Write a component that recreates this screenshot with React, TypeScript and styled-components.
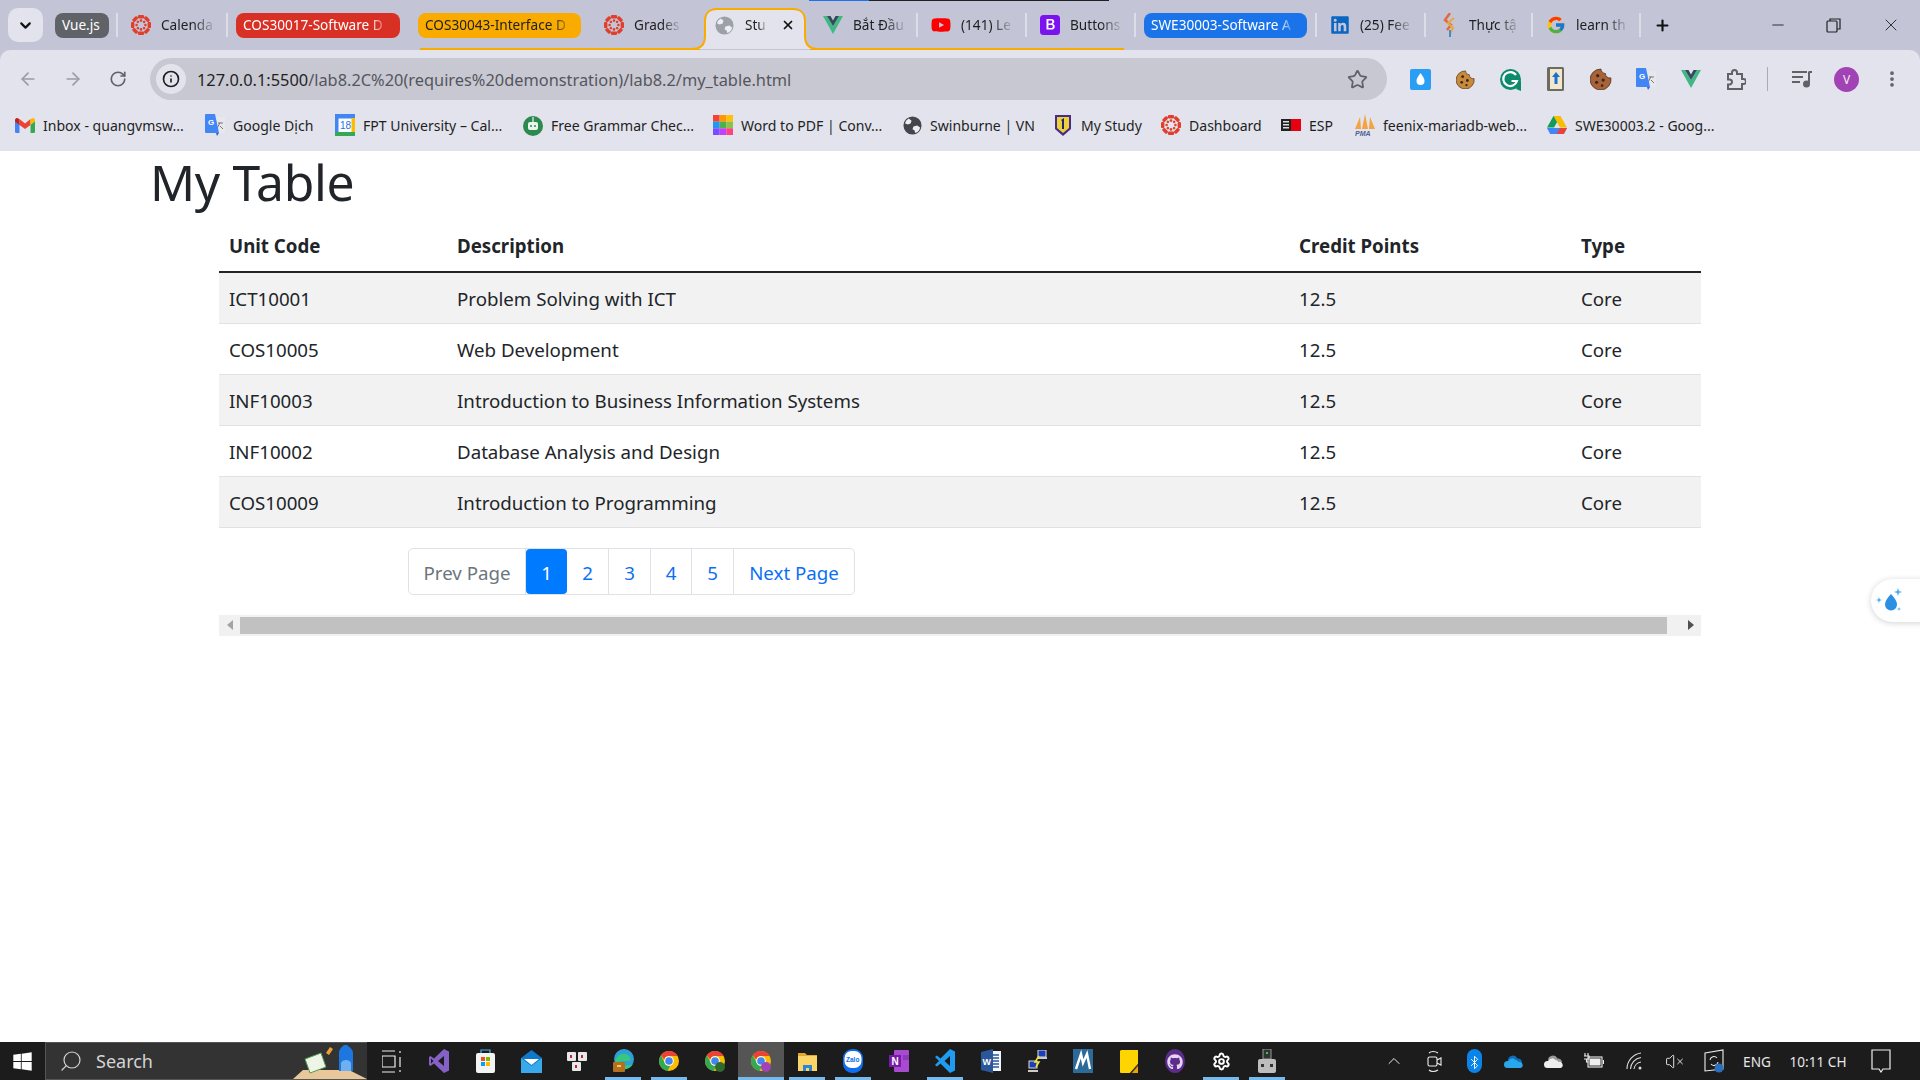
import { ReactNode } from 'react';
import styled, { createGlobalStyle } from 'styled-components';
import {
	ArrowLeft,
	ArrowRight,
	RotateCw,
	Star,
	ChevronDown,
	X,
	Plus,
	Minus,
	Info,
	Search,
	EllipsisVertical,
	Settings,
	ChevronUp,
	Bluetooth,
	VolumeX,
} from 'lucide-react';
import { FaYoutube, FaLinkedin, FaGithub, FaWindows } from 'react-icons/fa';
import { FcGoogle } from 'react-icons/fc';

const UI_FONT = `"Noto Sans", "Open Sans", sans-serif`;

const GlobalStyle = createGlobalStyle`
	html, body {
		margin: 0;
		padding: 0;
		background: #fff;
		overflow: hidden;
	}
	body {
		font-family: ${UI_FONT};
	}
`;

const Screen = styled.div`
	position: relative;
	width: 1920px;
	height: 1080px;
	display: flex;
	flex-direction: column;
	overflow: hidden;
	background: #fff;
`;

const Chrome = styled.header`
	background: #c3c4d6;
	flex: none;
`;

const TabStrip = styled.div`
	position: relative;
	height: 50px;
	display: flex;
	align-items: center;
	padding-left: 8px;
	box-sizing: border-box;
`;

const LoadBar = styled.div`
	position: absolute;
	top: 0;
	left: 809px;
	width: 300px;
	height: 1px;
	background: linear-gradient(to right, #1a73e8 0 60px, #202124 60px);
`;

const OrangeLine = styled.div<{ $left: number; $width: number }>`
	position: absolute;
	top: 48px;
	left: ${(p) => p.$left}px;
	width: ${(p) => p.$width}px;
	height: 2px;
	background: #f9ab00;
`;

const DropButton = styled.div`
	width: 35px;
	height: 34px;
	margin-right: 12px;
	border-radius: 10px;
	background: #e2e3ec;
	color: #111;
	display: flex;
	align-items: center;
	justify-content: center;
`;

const TabSep = styled.div<{ $ml?: number; $mr?: number }>`
	width: 2px;
	height: 24px;
	background: #dcdde6;
	flex: none;
	margin-left: ${(p) => p.$ml ?? 0}px;
	margin-right: ${(p) => p.$mr ?? 0}px;
`;

const GroupChip = styled.div<{ $bg: string; $fg: string; $w: number; $ml?: number; $mr?: number }>`
	width: ${(p) => p.$w}px;
	height: 25px;
	flex: none;
	box-sizing: border-box;
	padding: 0 7px;
	margin-left: ${(p) => p.$ml ?? 0}px;
	margin-right: ${(p) => p.$mr ?? 0}px;
	border-radius: 8px;
	background: ${(p) => p.$bg};
	color: ${(p) => p.$fg};
	font-size: 13.6px;
	line-height: 24px;
	white-space: nowrap;
`;

const ChipLabel = styled.span`
	display: inline-block;
	mask-image: linear-gradient(to right, #000 91%, rgba(0, 0, 0, 0.3) 100%);
`;

const Tab = styled.div<{ $w: number; $pad: number }>`
	width: ${(p) => p.$w}px;
	flex: none;
	height: 40px;
	box-sizing: border-box;
	padding-left: ${(p) => p.$pad}px;
	display: flex;
	align-items: center;
	gap: 10px;
	font-size: 13.6px;
	color: #1f1f1f;
`;

const TabIcon = styled.span`
	width: 20px;
	height: 20px;
	flex: none;
	display: flex;
	align-items: center;
	justify-content: center;
`;

const TabTitle = styled.span`
	white-space: nowrap;
	line-height: 18px;
	margin-top: -1px;
	mask-image: linear-gradient(to right, #000 62%, rgba(0, 0, 0, 0.15) 100%);
`;

const ActiveTab = styled.div`
	position: relative;
	width: 100px;
	height: 42px;
	margin-top: 8px;
	flex: none;
	box-sizing: border-box;
	padding: 0 0 8px 10px;
	display: flex;
	align-items: center;
	font-size: 13.6px;
	color: #1f1f1f;
`;

const ActiveShape = styled.svg`
	position: absolute;
	left: -14px;
	top: 0;
	width: 128px;
	height: 42px;
`;

const ActiveInner = styled.span`
	position: relative;
	display: flex;
	align-items: center;
	gap: 11px;
`;

const CloseX = styled.span`
	position: relative;
	margin-left: 15px;
	display: flex;
	color: #111;
`;

const NewTab = styled.div`
	margin-left: 13px;
	display: flex;
	color: #111;
`;

const WindowControls = styled.div`
	margin-left: auto;
	display: flex;
	align-items: center;
	height: 40px;
`;

const WindowBtn = styled.div<{ $w: number }>`
	width: ${(p) => p.$w}px;
	display: flex;
	justify-content: center;
	color: #222;
`;

const MaxIcon = styled.svg`
	width: 15px;
	height: 15px;
`;

const Toolbar = styled.div`
	height: 50px;
	box-sizing: border-box;
	padding: 8px 0 0 5px;
	background: #e2e3ec;
	border-radius: 10px 10px 0 0;
	display: flex;
	align-items: center;
`;

const NavBtn = styled.div<{ $muted?: boolean }>`
	width: 45px;
	height: 42px;
	flex: none;
	display: flex;
	align-items: center;
	justify-content: center;
	color: ${(p) => (p.$muted ? '#9b9ca4' : '#5f6368')};
`;

const Omnibox = styled.div`
	width: 1237px;
	height: 42px;
	margin: 0 11px 0 10px;
	flex: none;
	box-sizing: border-box;
	padding: 0 8px 0 6px;
	border-radius: 21px;
	background: #c8c8d2;
	display: flex;
	align-items: center;
`;

const InfoBadge = styled.div`
	width: 30px;
	height: 30px;
	border-radius: 50%;
	background: #e2e3ec;
	display: flex;
	align-items: center;
	justify-content: center;
	color: #1f1f1f;
	margin-right: 11px;
`;

const UrlText = styled.div`
	flex: 1;
	padding-top: 1px;
	font-size: 16.36px;
	color: #55565d;
	white-space: nowrap;
`;

const UrlHost = styled.span`
	color: #1f1f1f;
`;

const StarBtn = styled.div`
	display: flex;
	color: #5f6368;
	margin-right: 11px;
`;

const ToolbarSep = styled.div`
	width: 1px;
	height: 24px;
	background: #a9aab6;
	margin: 0 11px 0 9px;
	flex: none;
`;

const Avatar = styled.div`
	width: 25px;
	height: 25px;
	border-radius: 50%;
	background: #a142b5;
	color: #eee;
	font-size: 12px;
	display: flex;
	align-items: center;
	justify-content: center;
`;

const Bookmarks = styled.div`
	height: 51px;
	box-sizing: border-box;
	padding: 0 0 1px 15px;
	background: #e2e3ec;
	display: flex;
	align-items: center;
`;

const Bookmark = styled.div<{ $w: number }>`
	width: ${(p) => p.$w}px;
	flex: none;
	display: flex;
	align-items: center;
	gap: 8px;
	font-size: 14.05px;
	color: #1f1f1f;
	white-space: nowrap;
`;

const BookmarkIcon = styled.span`
	width: 20px;
	height: 20px;
	flex: none;
	display: flex;
	align-items: center;
	justify-content: center;
`;

const Page = styled.main`
	flex: 1;
	padding-left: 150px;
	color: #212529;
`;

const Title = styled.h1`
	margin: 0;
	height: 73px;
	font-size: 49.8px;
	font-weight: 400;
	line-height: 63px;
	letter-spacing: -0.3px;
`;

const TableWrap = styled.div`
	margin-left: 69px;
	width: 1482px;
`;

const UnitTable = styled.table`
	width: 1482px;
	table-layout: fixed;
	border-collapse: collapse;
	font-size: 18.7px;
`;

const HeadCell = styled.th<{ $w: number }>`
	width: ${(p) => p.$w}px;
	height: 48px;
	box-sizing: border-box;
	padding: 0 10px 4px;
	text-align: left;
	font-weight: 700;
	border-bottom: 2px solid #212529;
`;

const BodyRow = styled.tr`
	height: 51px;
	border-bottom: 1px solid #dee2e6;
	&:nth-child(odd) {
		background: #f2f2f2;
	}
`;

const BodyCell = styled.td`
	padding: 2px 10px 0;
`;

const Pagination = styled.nav`
	margin: 20px 0 0 189px;
	width: 447px;
	height: 47px;
	box-sizing: border-box;
	display: flex;
	border: 1px solid #dee2e6;
	border-radius: 5px;
	font-size: 18.7px;
`;

const PageLink = styled.div<{ $w: number; $active?: boolean; $muted?: boolean; $last?: boolean }>`
	width: ${(p) => p.$w}px;
	flex: none;
	box-sizing: border-box;
	padding-top: 2px;
	display: flex;
	align-items: center;
	justify-content: center;
	border-right: ${(p) => (p.$last || p.$active ? 'none' : '1px solid #dee2e6')};
	border-radius: ${(p) => (p.$active ? '4px' : '0')};
	background: ${(p) => (p.$active ? '#007bff' : 'transparent')};
	color: ${(p) => (p.$active ? '#fff' : p.$muted ? '#6c757d' : '#0b6ff5')};
`;

const Scrollbar = styled.div`
	margin-top: 20px;
	height: 21px;
	background: #f1f1f1;
	display: flex;
	align-items: center;
`;

const ScrollBtn = styled.div<{ $w: number; $pad?: number }>`
	width: ${(p) => p.$w}px;
	flex: none;
	box-sizing: border-box;
	padding-left: ${(p) => p.$pad ?? 0}px;
	display: flex;
	justify-content: center;
`;

const ScrollThumb = styled.div`
	width: 1427px;
	height: 17px;
	background: #c1c1c1;
	flex: none;
`;

const FloatButton = styled.div`
	position: absolute;
	left: 1871px;
	top: 579px;
	width: 60px;
	height: 43px;
	border-radius: 22px 0 0 22px;
	background: #fff;
	box-shadow: 0 1px 6px rgba(0, 0, 0, 0.18);
	padding-left: 5px;
	box-sizing: border-box;
	display: flex;
	align-items: center;
`;

const Taskbar = styled.footer`
	height: 38px;
	flex: none;
	background: #1c1c1c;
	display: flex;
	align-items: stretch;
	color: #fff;
`;

const StartBtn = styled.div`
	width: 45px;
	flex: none;
	display: flex;
	align-items: center;
	justify-content: center;
`;

const SearchBox = styled.div`
	position: relative;
	width: 322px;
	flex: none;
	box-sizing: border-box;
	background: #333;
	border: 1px solid #555;
	border-right: none;
	display: flex;
	align-items: center;
	gap: 13px;
	padding-left: 13px;
	color: #d4d4d4;
	font-size: 18px;
	overflow: hidden;
`;

const SearchGlyph = styled.span`
	display: flex;
	transform: scaleX(-1);
`;

const SearchArt = styled.svg`
	position: absolute;
	right: 0;
	bottom: 0;
	width: 74px;
	height: 34px;
`;

const TaskSlot = styled.div<{ $w?: number; $active?: boolean; $open?: boolean }>`
	position: relative;
	width: ${(p) => p.$w ?? 46}px;
	flex: none;
	display: flex;
	align-items: center;
	justify-content: center;
	background: ${(p) => (p.$active ? '#555' : 'transparent')};
	${(p) =>
		p.$open &&
		`
		&::after {
			content: '';
			position: absolute;
			left: 5px;
			right: 5px;
			bottom: 0;
			height: 3px;
			background: #76b9ed;
		}
	`}
	${(p) => p.$active && `&::after { left: 0; right: 0; }`}
`;

const Tray = styled.div`
	margin-left: auto;
	padding-right: 15px;
	display: flex;
	align-items: center;
	color: #eee;
`;

const TrayIcon = styled.span<{ $w?: number }>`
	width: ${(p) => p.$w ?? 40}px;
	flex: none;
	display: flex;
	justify-content: center;
`;

const TrayText = styled.span<{ $w: number }>`
	width: ${(p) => p.$w}px;
	flex: none;
	text-align: center;
	font-size: 13.6px;
	white-space: nowrap;
	color: #e8e8e8;
`;

function CanvasIcon({ size = 20 }: { size?: number }) {
	const dots = [0, 45, 90, 135, 180, 225, 270, 315];
	return (
		<svg width={size} height={size} viewBox="0 0 20 20">
			{dots.map((a) => (
				<g key={a} transform={`rotate(${a} 10 10)`}>
					<rect x="6.900" y="0" width="6.200" height="3.400" rx="1.200" fill="#e13f2b" />
					<circle cx="10" cy="5.600" r="1.300" fill="#e13f2b" />
				</g>
			))}
		</svg>
	);
}

function GlobeIcon({ color = '#9da0a8', size = 19 }: { color?: string; size?: number }) {
	return (
		<svg width={size} height={size} viewBox="0 0 20 20">
			<circle cx="10" cy="10" r="9.500" fill={color} />
			<path
				d="M6 2.500 9 5l-1 3-3 1-3-1.500A8 8 0 0 1 6 2.500ZM11 11l4-1 3 2a8 8 0 0 1-5 6l-1-3-2-1Z"
				fill="#eceef3"
			/>
		</svg>
	);
}

function VueIcon({ size = 20 }: { size?: number }) {
	return (
		<svg width={size} height={size} viewBox="0 0 20 18">
			<path d="M0 0h4l6 10 6-10h4L10 18Z" fill="#41b883" />
			<path d="M4 0h3.500L10 4.500 12.500 0H16l-6 10Z" fill="#34495e" />
		</svg>
	);
}

function BootstrapIcon() {
	return (
		<svg width="20" height="20" viewBox="0 0 20 20">
			<rect width="20" height="20" rx="3.500" fill="#7b13f0" />
			<path
				d="M6.500 4h4.700c2 0 3.100 1 3.100 2.600 0 1.200-.7 2-1.700 2.300 1.300.2 2.200 1.200 2.200 2.600 0 2-1.400 3.100-3.700 3.100H6.500ZM8.400 5.600v2.800h2.100c1.200 0 1.800-.5 1.800-1.400s-.6-1.400-1.700-1.400Zm0 4.300v3.100h2.400c1.300 0 2-.5 2-1.600s-.7-1.500-2.100-1.500Z"
				fill="#fff"
			/>
		</svg>
	);
}

function ThucTapIcon() {
	return (
		<svg width="13" height="24" viewBox="0 0 13 24">
			<path d="M7 0 2 7l6 5-4 5" fill="none" stroke="#e4683f" strokeWidth="2.500" />
			<path d="M11 5 5 10l5 5-3 6" fill="none" stroke="#e8a93c" strokeWidth="2" />
			<path d="M7 17v7" stroke="#3f8fd0" strokeWidth="2" />
		</svg>
	);
}

function GmailIcon() {
	return (
		<svg width="20" height="15" viewBox="0 0 20 15">
			<path d="M0 2v11.500A1.500 1.500 0 0 0 1.500 15H4.500V6Z" fill="#4285f4" />
			<path d="M20 2v11.500a1.500 1.500 0 0 1-1.500 1.500h-3V6Z" fill="#34a853" />
			<path d="M4.500 7V1L10 5.500 15.500 1v6L10 11Z" fill="#ea4335" />
			<path d="M0 2c0-1.700 2-2.600 3.300-1.600L4.500 1.300V7L0 3.500Z" fill="#c5221f" />
			<path d="M20 2c0-1.700-2-2.600-3.300-1.600l-1.200.9V7L20 3.500Z" fill="#fbbc04" />
		</svg>
	);
}

function TranslateIcon() {
	return (
		<svg width="20" height="22" viewBox="0 0 20 22">
			<path d="M8 3h11a1 1 0 0 1 1 1v14a1 1 0 0 1-1 1h-5l-3-16Z" fill="#e8e8ec" />
			<path d="M15 8.500l-3 6M13 9h5M15 12l3 3" stroke="#777" strokeWidth="1" fill="none" />
			<path d="M1 0h9l4 19H1a1 1 0 0 1-1-1V1a1 1 0 0 1 1-1Z" fill="#4285f4" />
			<path d="M14 19l-2 3-1-3Z" fill="#3367c7" />
			<text x="3" y="11" fontSize="8" fontWeight="700" fill="#fff" fontFamily="Liberation Sans">
				G
			</text>
		</svg>
	);
}

function CalendarIcon() {
	return (
		<svg width="20" height="22" viewBox="0 0 20 22">
			<rect width="20" height="22" rx="1" fill="#fff" />
			<rect width="20" height="4.500" fill="#4285f4" />
			<rect width="3.500" height="22" fill="#4285f4" />
			<rect y="18" width="20" height="4" fill="#34a853" />
			<rect x="16.500" y="4" width="3.500" height="14" fill="#fbbc04" />
			<text x="5" y="15" fontSize="10" fill="#1a73e8" fontFamily="Liberation Sans">
				18
			</text>
		</svg>
	);
}

function RobotIcon() {
	return (
		<svg width="20" height="22" viewBox="0 0 20 22">
			<circle cx="10" cy="12" r="10" fill="#2d8a4e" />
			<rect x="5" y="8" width="10" height="8" rx="2" fill="#eaf5ec" />
			<circle cx="8" cy="12" r="1" fill="#2d8a4e" />
			<circle cx="12" cy="12" r="1" fill="#2d8a4e" />
			<rect x="9.400" y="3" width="1.200" height="5" fill="#eaf5ec" />
		</svg>
	);
}

function WordPdfIcon() {
	const cells = ['#f44336', '#ff9800', '#ffc107', '#2196f3', '#4caf50', '#8bc34a', '#7c4dff', '#c040fb', '#ff4081'];
	return (
		<svg width="20" height="20" viewBox="0 0 21 21">
			{cells.map((c, i) => (
				<rect key={c} x={(i % 3) * 7} y={Math.floor(i / 3) * 7} width="7" height="7" fill={c} />
			))}
		</svg>
	);
}

function ShieldIcon() {
	return (
		<svg width="16" height="22" viewBox="0 0 16 22">
			<path d="M0 1h16v14l-8 7-8-7Z" fill="#4a2a8a" />
			<path d="M2 3h12v11l-6 5-6-5Z" fill="#e9d23a" />
			<path d="M6 6l3-2v11H7V7Z" fill="#28246a" />
		</svg>
	);
}

function EspIcon() {
	return (
		<svg width="20" height="12" viewBox="0 0 20 12">
			<rect width="20" height="12" fill="#e60012" />
			<rect width="10" height="12" fill="#222" />
			<rect x="2" y="2" width="6" height="1.500" fill="#ddd" />
			<rect x="2" y="5" width="6" height="1.500" fill="#ddd" />
			<rect x="2" y="8" width="6" height="1.500" fill="#ddd" />
		</svg>
	);
}

function PmaIcon() {
	return (
		<svg width="20" height="23" viewBox="0 0 20 23">
			<path d="M0 15 5 3l1 12ZM7 15l3-15 3 15ZM14 15l1-12 5 12Z" fill="#f4a340" />
			<text x="0" y="22" fontSize="7" fontWeight="700" fontStyle="italic" fill="#4a5f94" fontFamily="Liberation Sans">
				PMA
			</text>
		</svg>
	);
}

function DriveIcon() {
	return (
		<svg width="20" height="18" viewBox="0 0 20 18">
			<path d="M6.500 0h7L7 11.500H0Z" fill="#0f9d58" />
			<path d="M13.500 0 20 11.500h-7L6.500 0Z" fill="#fbbc04" />
			<path d="M0 12h20l-3.200 6H3.200Z" fill="#4285f4" />
			<path d="M13 12h7l-3.200 6h-7Z" fill="#ea4335" />
		</svg>
	);
}

function WaterIcon() {
	return (
		<svg width="21" height="21" viewBox="0 0 21 21">
			<rect width="21" height="21" rx="2" fill="#2a9df4" />
			<path d="M10.500 4c3 4 4 6 4 8a4 4 0 0 1-8 0c0-2 1-4 4-8Z" fill="#fff" />
		</svg>
	);
}

function CookieIcon({ size = 19, color = '#c98a3c' }: { size?: number; color?: string }) {
	return (
		<svg width={size} height={size} viewBox="0 0 20 20">
			<path d="M10 1a4 4 0 0 0 4 4 4 4 0 0 0 5 4 9.500 9.500 0 1 1-9-8Z" fill={color} stroke="#5a3a1a" strokeWidth="0.800" />
			<circle cx="7" cy="7" r="1.500" fill="#3a2a1a" />
			<circle cx="12" cy="11" r="1.500" fill="#3a2a1a" />
			<circle cx="6" cy="13" r="1.500" fill="#3a2a1a" />
			<circle cx="11" cy="16" r="1.200" fill="#3a2a1a" />
		</svg>
	);
}

function GrammarlyIcon() {
	return (
		<svg width="21" height="23" viewBox="0 0 21 23">
			<circle cx="10.500" cy="11.500" r="10.500" fill="#0b8a6c" />
			<path d="M16 7a7 7 0 1 0 1 6h-5.500" fill="none" stroke="#fff" strokeWidth="2.200" />
			<path d="M21 12v11l-5-2Z" fill="#0b8a6c" />
		</svg>
	);
}

function BookUpIcon() {
	return (
		<svg width="17" height="24" viewBox="0 0 17 24">
			<rect width="17" height="24" rx="1.500" fill="#6b6b60" />
			<rect x="3" y="2" width="12" height="20" fill="#f0e8cc" />
			<path d="M9 5l4 5h-2.500v7h-3v-7H5Z" fill="#1a6fd0" />
		</svg>
	);
}

function PuzzleIcon() {
	return (
		<svg width="20" height="21" viewBox="0 0 20 21" fill="none" stroke="#5f6368" strokeWidth="2">
			<path d="M2 5h4V3.500a2.500 2.500 0 0 1 5 0V5h5v5h1.500a2.500 2.500 0 0 1 0 5H16v5H2v-4.500h1.500a2.500 2.500 0 0 0 0-5H2Z" />
		</svg>
	);
}

function MediaIcon() {
	return (
		<svg width="20" height="18" viewBox="0 0 20 18" fill="none" stroke="#5f6368" strokeWidth="2">
			<path d="M0 2h15M0 7h11M0 12h8" />
			<path d="M17 1.500v12" />
			<circle cx="14.500" cy="14" r="2.500" fill="#5f6368" />
			<path d="M17 2h3" />
		</svg>
	);
}

function DropSparkle() {
	return (
		<svg width="30" height="28" viewBox="0 0 30 28">
			<path d="M15 7c4 4.500 6 7.500 6 10.500a6 6 0 0 1-12 0C9 14.500 11 11.500 15 7Z" fill="#2b8fe3" />
			<path d="M22 1l1 3 3 1-3 1-1 3-1-3-3-1 3-1ZM3 10l.8 2.200L6 13l-2.200.8L3 16l-.8-2.200L0 13l2.200-.8ZM23 20l.5 1.500L25 22l-1.500.5L23 24l-.5-1.500L21 22l1.500-.5Z" fill="#43aef5" />
		</svg>
	);
}

function TaskViewIcon() {
	return (
		<svg width="20" height="23" viewBox="0 0 20 23" fill="none" stroke="#eee" strokeWidth="1.200">
			<path d="M0 1h13M0 22h13M0 6h13v11H0ZM18 1v2M18 7v10M18 20v2" />
		</svg>
	);
}

function VsIcon() {
	return (
		<svg width="20" height="24" viewBox="0 0 20 24">
			<path d="M15 0l5 2.500v19L15 24 5 14.500 1.500 17 0 16V8l1.500-1L5 9.500ZM15 7l-6 5 6 5ZM2 9.500v5L4.500 12Z" fill="#8661c5" />
		</svg>
	);
}

function StoreIcon() {
	return (
		<svg width="19" height="24" viewBox="0 0 19 24">
			<path d="M5 4V1h9v3" fill="none" stroke="#4ab5e8" strokeWidth="1.200" />
			<rect y="4" width="19" height="20" rx="2" fill="#f3f3f3" />
			<rect x="5" y="8" width="4" height="4" fill="#f25022" />
			<rect x="10" y="8" width="4" height="4" fill="#7fba00" />
			<rect x="5" y="13" width="4" height="4" fill="#00a4ef" />
			<rect x="10" y="13" width="4" height="4" fill="#ffb900" />
		</svg>
	);
}

function MailIcon() {
	return (
		<svg width="21" height="23" viewBox="0 0 21 23">
			<path d="M0 8 10.500 0 21 8v15H0Z" fill="#0f78c8" />
			<path d="M0 8l10.500 8L21 8v15H0Z" fill="#38a9ea" />
			<path d="M3 9h15l-7.500 6Z" fill="#fff" />
		</svg>
	);
}

function KeysIcon() {
	return (
		<svg width="20" height="20" viewBox="0 0 20 20">
			<rect x="0" y="1" width="9" height="9" rx="1" fill="#e8e8e8" />
			<rect x="11" y="1" width="9" height="9" rx="1" fill="#e8e8e8" />
			<rect x="5" y="11" width="9" height="9" rx="1" fill="#e8e8e8" />
			<rect x="3" y="4" width="2" height="3" fill="#c4262e" />
			<rect x="14" y="4" width="2" height="3" fill="#c4262e" />
			<rect x="8" y="14" width="2" height="3" fill="#c4262e" />
		</svg>
	);
}

function EdgeIcon() {
	return (
		<svg width="21" height="24" viewBox="0 0 21 24">
			<circle cx="11" cy="10" r="10" fill="#2f9fd8" />
			<path d="M3 10c2-5 9-7 13-3 2 2 2 5-1 5H7c0 4 6 6 13 3-3 6-11 7-15 3-3-2-3-6-2-8Z" fill="#37c880" />
			<rect x="0" y="13" width="12" height="10" rx="1" fill="#b5701d" />
			<rect x="4" y="16" width="4" height="2" fill="#f2c66d" />
		</svg>
	);
}

function ChromeIcon({ badge }: { badge?: string }) {
	return (
		<svg width="20" height="24" viewBox="0 0 20 24">
			<circle cx="10" cy="12" r="10" fill="#fbbc04" />
			<path d="M10 2a10 10 0 0 1 8.700 5H10a5 5 0 0 0-4.700 3.400L1.900 6.200A10 10 0 0 1 10 2Z" fill="#ea4335" />
			<path d="M1.900 6.200 6 14.500a5 5 0 0 0 5 2.400L8.500 21.900A10 10 0 0 1 1.900 6.200Z" fill="#34a853" />
			<circle cx="10" cy="12" r="4.800" fill="#fff" />
			<circle cx="10" cy="12" r="3.800" fill="#4285f4" />
			{badge && <circle cx="15" cy="18" r="5" fill={badge} />}
		</svg>
	);
}

function FolderIcon() {
	return (
		<svg width="19" height="20" viewBox="0 0 19 20">
			<path d="M0 2h7l2 2h10v16H0Z" fill="#e0a82e" />
			<rect y="5" width="19" height="15" fill="#fbd568" />
			<path d="M5 20v-6h9v6h-3v-3H8v3Z" fill="#2c86d8" />
		</svg>
	);
}

function ZaloIcon() {
	return (
		<svg width="20" height="24" viewBox="0 0 20 24">
			<rect width="20" height="24" rx="9" fill="#0f6df0" />
			<rect x="1.500" y="2" width="17" height="17" rx="7" fill="#fff" />
			<text x="3" y="13" fontSize="6.500" fontWeight="700" fill="#0f6df0" fontFamily="Liberation Sans">
				Zalo
			</text>
		</svg>
	);
}

function OneNoteIcon() {
	return (
		<svg width="20" height="22" viewBox="0 0 20 22">
			<rect x="5" width="15" height="22" rx="1" fill="#a84bd0" />
			<rect x="14" y="5" width="6" height="5" fill="#8b3bb8" />
			<rect y="5" width="12" height="12" fill="#7719aa" />
			<text x="2.500" y="15" fontSize="10" fontWeight="700" fill="#fff" fontFamily="Liberation Sans">
				N
			</text>
		</svg>
	);
}

function VscodeIcon() {
	return (
		<svg width="20" height="24" viewBox="0 0 20 24">
			<path d="M15 0l5 2.500v19L15 24 5.500 14.500 2 17.500 0 16l4-4-4-4 2-1.500 3.500 3L15 0Zm0 7-5.500 5 5.500 5Z" fill="#1f9cf0" />
		</svg>
	);
}

function WordIcon() {
	return (
		<svg width="20" height="24" viewBox="0 0 20 24">
			<rect x="5" y="2" width="15" height="20" fill="#f4f6fa" />
			<path d="M11 6h7M11 9h7M11 12h7M11 15h7M11 18h7" stroke="#2b579a" strokeWidth="1.300" />
			<path d="M0 3 12 0v24L0 21Z" fill="#2b579a" />
			<text x="1.500" y="16" fontSize="9" fontWeight="700" fill="#fff" fontFamily="Liberation Sans">
				W
			</text>
		</svg>
	);
}

function PuttyIcon() {
	return (
		<svg width="19" height="23" viewBox="0 0 19 23">
			<rect x="10" y="0" width="8" height="7" fill="#1b3fb5" stroke="#ddd" />
			<rect x="1" y="11" width="8" height="7" fill="#1b3fb5" stroke="#ddd" />
			<path d="M0 21h10M9 8h10" stroke="#ccc" strokeWidth="2" />
			<path d="M11 6 7 12h4l-3 5" stroke="#f2e23a" strokeWidth="1.500" fill="none" />
		</svg>
	);
}

function MobaIcon() {
	return (
		<svg width="20" height="24" viewBox="0 0 20 24">
			<rect width="20" height="24" fill="#2c6a9a" />
			<path d="M3 20 8 5l2 9 4-9 3 15" stroke="#fff" strokeWidth="2.400" fill="none" />
		</svg>
	);
}

function StickyIcon() {
	return (
		<svg width="18" height="23" viewBox="0 0 18 23">
			<path d="M1 0h17v14l-8 9H1a1 1 0 0 1-1-1V1Z" fill="#ffd500" />
			<path d="M18 14v9h-8Z" fill="#3a3a3a" />
			<path d="M18 16v7h-6Z" fill="#f2a100" />
		</svg>
	);
}

function GithubBadge() {
	return (
		<svg width="20" height="24" viewBox="0 0 20 24">
			<ellipse cx="10" cy="12" rx="10" ry="12" fill="#5d2b8c" />
			<foreignObject x="2" y="4" width="16" height="16">
				<FaGithub size={16} color="#e4d4f0" />
			</foreignObject>
		</svg>
	);
}

function UsbIcon() {
	return (
		<svg width="20" height="24" viewBox="0 0 20 24">
			<rect x="6" y="0" width="8" height="10" fill="#333" stroke="#999" />
			<rect x="9" y="3" width="2" height="2" fill="#3c3" />
			<rect x="1" y="10" width="18" height="14" rx="2" fill="#bdbdbd" />
			<rect x="4" y="15" width="3" height="3" fill="#333" />
			<rect x="13" y="15" width="3" height="3" fill="#333" />
		</svg>
	);
}

function MeetIcon() {
	return (
		<svg width="15" height="23" viewBox="0 0 15 23" fill="none" stroke="#eee" strokeWidth="1.100">
			<path d="M2 3c2-2 6-2 9 0M2 20c2 2 6 2 9 0" />
			<rect x="1" y="7" width="9" height="9" rx="1.500" />
			<path d="M10 10l4-2v7l-4-2" />
		</svg>
	);
}

function BatteryIcon() {
	return (
		<svg width="20" height="16" viewBox="0 0 20 16" fill="none" stroke="#eee" strokeWidth="1.100">
			<path d="M1 0v3M4 0v3M0 3h5v3H0M2.500 6v3h2" />
			<rect x="4" y="4" width="14" height="10" />
			<rect x="6" y="6" width="10" height="6" fill="#eee" />
			<path d="M19.500 7v4" />
		</svg>
	);
}

function WifiArcs() {
	return (
		<svg width="16" height="18" viewBox="0 0 16 18" fill="none" stroke="#ddd" strokeWidth="1.100">
			<path d="M1 17A16 16 0 0 1 15 1M4.500 17A12 12 0 0 1 15 5.500M8 17A8 8 0 0 1 15 10" />
			<circle cx="14" cy="16" r="1.500" fill="#ddd" stroke="none" />
		</svg>
	);
}

function ImeIcon() {
	return (
		<svg width="20" height="24" viewBox="0 0 20 24">
			<path d="M1 4 19 1v19L1 22Z" fill="none" stroke="#eee" strokeWidth="1.100" />
			<path d="M6 11a4 4 0 0 1 7-2M14 13a4 4 0 0 1-7 2" fill="none" stroke="#eee" strokeWidth="1.100" />
			<circle cx="15" cy="19" r="4.500" fill="#2c6fbd" />
		</svg>
	);
}

function NotifyIcon() {
	return (
		<svg width="20" height="24" viewBox="0 0 20 24" fill="none" stroke="#eee" strokeWidth="1.200">
			<path d="M1 1h18v19h-7l-2 3-2-3H1Z" />
		</svg>
	);
}

function BluetoothBadge() {
	return (
		<svg width="15" height="24" viewBox="0 0 15 24">
			<rect width="15" height="24" rx="7.500" fill="#0a84e8" />
			<foreignObject x="0" y="4" width="15" height="16">
				<Bluetooth size={15} color="#fff" strokeWidth={1.500} />
			</foreignObject>
		</svg>
	);
}

function OneDriveIcon({ top, bottom }: { top: string; bottom: string }) {
	return (
		<svg width="20" height="14" viewBox="0 0 20 14">
			<path d="M4 7a5 5 0 0 1 9.500-2.500A4 4 0 0 1 18 8H4Z" fill={top} />
			<path d="M3.500 14a3.500 3.500 0 0 1 0-7h1a4 4 0 0 1 7-1 3.500 3.500 0 0 1 3 2 3 3 0 0 1 2 6Z" fill={bottom} />
		</svg>
	);
}

interface TabData {
	width: number;
	pad: number;
	icon: ReactNode;
	title: string;
}

function BrowserTab({ width, pad, icon, title }: TabData) {
	return (
		<Tab $w={width} $pad={pad}>
			<TabIcon>{icon}</TabIcon>
			<TabTitle>{title}</TabTitle>
		</Tab>
	);
}

const bookmarks: { w: number; icon: ReactNode; text: string }[] = [
	{ w: 190, icon: <GmailIcon />, text: 'Inbox - quangvmsw...' },
	{ w: 130, icon: <TranslateIcon />, text: 'Google Dịch' },
	{ w: 188, icon: <CalendarIcon />, text: 'FPT University – Cal...' },
	{ w: 190, icon: <RobotIcon />, text: 'Free Grammar Chec...' },
	{ w: 189, icon: <WordPdfIcon />, text: 'Word to PDF | Conv...' },
	{ w: 151, icon: <GlobeIcon color="#44464c" />, text: 'Swinburne | VN' },
	{ w: 108, icon: <ShieldIcon />, text: 'My Study' },
	{ w: 120, icon: <CanvasIcon />, text: 'Dashboard' },
	{ w: 74, icon: <EspIcon />, text: 'ESP' },
	{ w: 192, icon: <PmaIcon />, text: 'feenix-mariadb-web...' },
	{ w: 180, icon: <DriveIcon />, text: 'SWE30003.2 - Goog...' },
];

const units = [
	['ICT10001', 'Problem Solving with ICT', '12.5', 'Core'],
	['COS10005', 'Web Development', '12.5', 'Core'],
	['INF10003', 'Introduction to Business Information Systems', '12.5', 'Core'],
	['INF10002', 'Database Analysis and Design', '12.5', 'Core'],
	['COS10009', 'Introduction to Programming', '12.5', 'Core'],
];

const pages = [
	{ label: 'Prev Page', w: 117, muted: true },
	{ label: '1', w: 41, active: true },
	{ label: '2', w: 42 },
	{ label: '3', w: 42 },
	{ label: '4', w: 41 },
	{ label: '5', w: 42 },
	{ label: 'Next Page', w: 120, last: true },
];

const taskApps: { icon: ReactNode; open?: boolean; active?: boolean; w?: number }[] = [
	{ icon: <TaskViewIcon />, w: 49 },
	{ icon: <VsIcon /> },
	{ icon: <StoreIcon /> },
	{ icon: <MailIcon /> },
	{ icon: <KeysIcon /> },
	{ icon: <EdgeIcon />, open: true },
	{ icon: <ChromeIcon />, open: true },
	{ icon: <ChromeIcon badge="#2e6b2e" /> },
	{ icon: <ChromeIcon badge="#a142b5" />, active: true, open: true },
	{ icon: <FolderIcon />, open: true },
	{ icon: <ZaloIcon />, open: true },
	{ icon: <OneNoteIcon /> },
	{ icon: <VscodeIcon />, open: true },
	{ icon: <WordIcon /> },
	{ icon: <PuttyIcon /> },
	{ icon: <MobaIcon /> },
	{ icon: <StickyIcon /> },
	{ icon: <GithubBadge /> },
	{ icon: <Settings size={19} color="#fff" strokeWidth={2.500} />, open: true },
	{ icon: <UsbIcon />, open: true },
];

export default function App() {
	return (
		<Screen>
			<GlobalStyle />
			<Chrome>
				<TabStrip>
					<LoadBar />
					<OrangeLine $left={420} $width={280} />
					<OrangeLine $left={810} $width={314} />
					<DropButton>
						<ChevronDown size={17} strokeWidth={3} />
					</DropButton>
					<GroupChip $bg="#5f6368" $fg="#fff" $w={54} $mr={7}>
						Vue.js
					</GroupChip>
					<TabSep />
					<BrowserTab width={108} pad={13} icon={<CanvasIcon />} title="Calenda" />
					<TabSep $mr={8} />
					<GroupChip $bg="#d93025" $fg="#fff" $w={164} $mr={18}>
						<ChipLabel>COS30017-Software D</ChipLabel>
					</GroupChip>
					<GroupChip $bg="#f9ab00" $fg="#202124" $w={163}>
						<ChipLabel>COS30043-Interface D</ChipLabel>
					</GroupChip>
					<BrowserTab width={124} pad={23} icon={<CanvasIcon />} title="Grades" />
					<ActiveTab>
						<ActiveShape viewBox="0 0 128 42">
							<path
								d="M1 41c9 0 13-4 13-13V13C14 6 18 1 26 1h76c8 0 12 5 12 12v15c0 9 4 13 13 13"
								fill="#e2e3ec"
								stroke="#f9ab00"
								strokeWidth="2"
							/>
						</ActiveShape>
						<ActiveInner>
							<GlobeIcon />
							<TabTitle>Stu</TabTitle>
						</ActiveInner>
						<CloseX>
							<X size={14} strokeWidth={3} />
						</CloseX>
					</ActiveTab>
					<BrowserTab width={111} pad={18} icon={<VueIcon />} title="Bắt Đầu" />
					<TabSep />
					<BrowserTab width={107} pad={13} icon={<FaYoutube size={22} color="#f00" />} title="(141) Le" />
					<TabSep />
					<BrowserTab width={107} pad={13} icon={<BootstrapIcon />} title="Buttons" />
					<TabSep $mr={8} />
					<GroupChip $bg="#1a73e8" $fg="#fff" $w={163} $mr={8}>
						<ChipLabel>SWE30003-Software A</ChipLabel>
					</GroupChip>
					<TabSep />
					<BrowserTab width={107} pad={13} icon={<FaLinkedin size={20} color="#0a66c2" />} title="(25) Fee" />
					<TabSep />
					<BrowserTab width={105} pad={13} icon={<ThucTapIcon />} title="Thực tậ" />
					<TabSep />
					<BrowserTab width={106} pad={13} icon={<FcGoogle size={20} />} title="learn th" />
					<TabSep />
					<NewTab>
						<Plus size={17} strokeWidth={3} />
					</NewTab>
					<WindowControls>
						<WindowBtn $w={55}>
							<Minus size={18} strokeWidth={1.200} />
						</WindowBtn>
						<WindowBtn $w={57}>
							<MaxIcon viewBox="0 0 15 15" fill="none" stroke="#222" strokeWidth="1.200">
								<rect x="1" y="3" width="10" height="11" rx="1" />
								<path d="M4 3V1h10v10h-3" />
							</MaxIcon>
						</WindowBtn>
						<WindowBtn $w={58}>
							<X size={20} strokeWidth={1.100} />
						</WindowBtn>
					</WindowControls>
				</TabStrip>
				<Toolbar>
					<NavBtn $muted>
						<ArrowLeft size={20} />
					</NavBtn>
					<NavBtn $muted>
						<ArrowRight size={20} />
					</NavBtn>
					<NavBtn>
						<RotateCw size={18} strokeWidth={2.200} />
					</NavBtn>
					<Omnibox>
						<InfoBadge>
							<Info size={18} strokeWidth={2.200} />
						</InfoBadge>
						<UrlText>
							<UrlHost>127.0.0.1:5500</UrlHost>/lab8.2C%20(requires%20demonstration)/lab8.2/my_table.html
						</UrlText>
						<StarBtn>
							<Star size={21} strokeWidth={2} />
						</StarBtn>
					</Omnibox>
					<NavBtn><WaterIcon /></NavBtn>
					<NavBtn><CookieIcon /></NavBtn>
					<NavBtn><GrammarlyIcon /></NavBtn>
					<NavBtn><BookUpIcon /></NavBtn>
					<NavBtn><CookieIcon size={22} color="#a8633a" /></NavBtn>
					<NavBtn><TranslateIcon /></NavBtn>
					<NavBtn><VueIcon /></NavBtn>
					<NavBtn><PuzzleIcon /></NavBtn>
					<ToolbarSep />
					<NavBtn><MediaIcon /></NavBtn>
					<NavBtn><Avatar>V</Avatar></NavBtn>
					<NavBtn><EllipsisVertical size={20} strokeWidth={2.500} /></NavBtn>
				</Toolbar>
				<Bookmarks>
					{bookmarks.map((b) => (
						<Bookmark key={b.text} $w={b.w}>
							<BookmarkIcon>{b.icon}</BookmarkIcon>
							{b.text}
						</Bookmark>
					))}
				</Bookmarks>
			</Chrome>
			<Page>
				<Title>My Table</Title>
				<TableWrap>
					<UnitTable>
						<thead>
							<tr>
								<HeadCell $w={228}>Unit Code</HeadCell>
								<HeadCell $w={842}>Description</HeadCell>
								<HeadCell $w={282}>Credit Points</HeadCell>
								<HeadCell $w={130}>Type</HeadCell>
							</tr>
						</thead>
						<tbody>
							{units.map((u) => (
								<BodyRow key={u[0]}>
									{u.map((value, i) => (
										<BodyCell key={i}>{value}</BodyCell>
									))}
								</BodyRow>
							))}
						</tbody>
					</UnitTable>
					<Pagination>
						{pages.map((p) => (
							<PageLink key={p.label} $w={p.w} $active={p.active} $muted={p.muted} $last={p.last}>
								{p.label}
							</PageLink>
						))}
					</Pagination>
					<Scrollbar>
						<ScrollBtn $w={21}>
							<svg width="6" height="10" viewBox="0 0 6 10">
								<path d="M6 0v10L0 5Z" fill="#a3a3a3" />
							</svg>
						</ScrollBtn>
						<ScrollThumb />
						<ScrollBtn $w={34} $pad={13}>
							<svg width="6" height="10" viewBox="0 0 6 10">
								<path d="M0 0v10l6-5Z" fill="#505050" />
							</svg>
						</ScrollBtn>
					</Scrollbar>
				</TableWrap>
			</Page>
			<FloatButton>
				<DropSparkle />
			</FloatButton>
			<Taskbar>
				<StartBtn>
					<FaWindows size={21} color="#fff" />
				</StartBtn>
				<SearchBox>
					<SearchGlyph>
						<Search size={24} strokeWidth={1.200} />
					</SearchGlyph>
					Search
					<SearchArt viewBox="0 0 74 34">
						<path d="M0 34 10 25h46l18 9Z" fill="#e8c89a" />
						<path d="M12 14 28 8l5 14-16 6Z" fill="#eef4e6" stroke="#4f9a55" />
						<path d="M33 8l4-6 3 2-4 6Z" fill="#f0a030" />
						<path d="M46 26V8c0-4 3-6 5-8h3c2 2 6 4 6 8v18Z" fill="#1c78e0" />
						<path d="M48 26v-8c1-4 9-4 10 0v8Z" fill="#6fb0f2" />
					</SearchArt>
				</SearchBox>
				{taskApps.map((app, i) => (
					<TaskSlot key={i} $w={app.w} $open={app.open} $active={app.active}>
						{app.icon}
					</TaskSlot>
				))}
				<Tray>
					<TrayIcon><ChevronUp size={20} strokeWidth={1.200} /></TrayIcon>
					<TrayIcon><MeetIcon /></TrayIcon>
					<TrayIcon><BluetoothBadge /></TrayIcon>
					<TrayIcon><OneDriveIcon top="#0f6cbd" bottom="#28a8ea" /></TrayIcon>
					<TrayIcon><OneDriveIcon top="#9a9a9a" bottom="#eee" /></TrayIcon>
					<TrayIcon><BatteryIcon /></TrayIcon>
					<TrayIcon><WifiArcs /></TrayIcon>
					<TrayIcon><VolumeX size={19} strokeWidth={1.200} /></TrayIcon>
					<TrayIcon><ImeIcon /></TrayIcon>
					<TrayText $w={46}>ENG</TrayText>
					<TrayText $w={76}>10:11 CH</TrayText>
					<TrayIcon $w={49}><NotifyIcon /></TrayIcon>
				</Tray>
			</Taskbar>
		</Screen>
	);
}
